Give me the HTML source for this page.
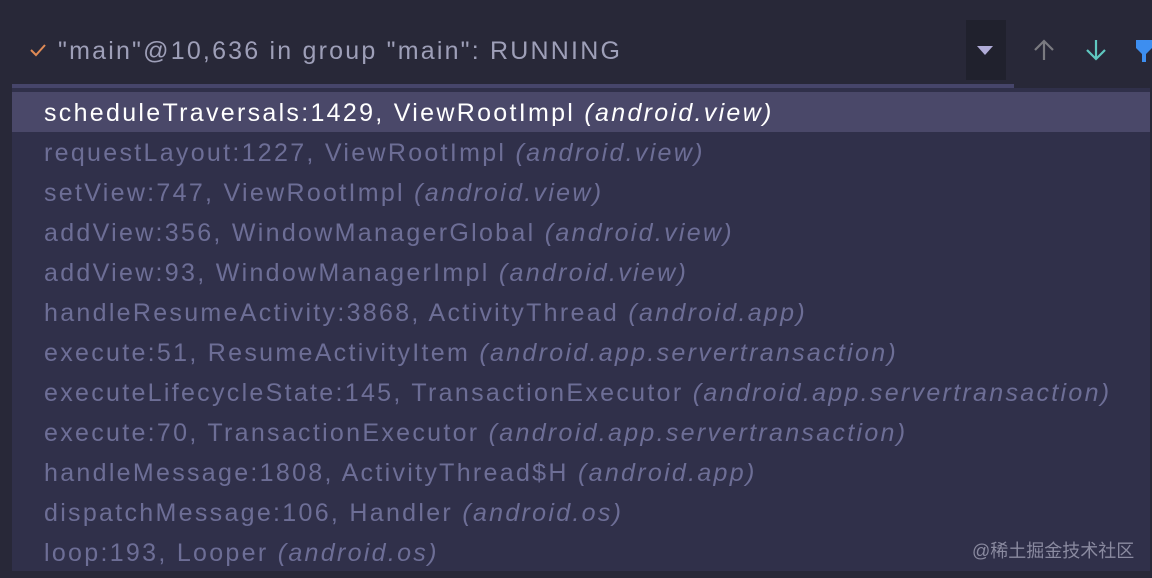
<!DOCTYPE html>
<html><head><meta charset="utf-8"><style>
html,body{margin:0;padding:0}
body{width:1152px;height:578px;background:#282838;position:relative;overflow:hidden;font-family:"Liberation Sans",sans-serif}
.hdr{position:absolute;left:58px;top:37px;font-size:25px;color:#9e9fb8;letter-spacing:2.2px;white-space:nowrap}
.chk{position:absolute;left:29px;top:43px}
.dd{position:absolute;left:966px;top:20px;width:40px;height:60px;background:#20212d}
.uline{position:absolute;left:12px;top:84px;width:1002px;height:4px;background:#46456a}
.panel{position:absolute;left:12px;top:88px;width:1138px;height:483px;background:#30304a}
.row{position:absolute;left:32px;height:40px;line-height:42px;font-size:25px;color:#6d6e96;letter-spacing:2.3px;white-space:nowrap}
.row i{font-style:italic}
.sel{position:absolute;left:0;top:4px;width:1138px;height:40px;background:#4a4869}
.row.s{color:#ffffff}
.wm{position:absolute;left:972px;top:537px;font-size:18px;color:#8a8aa0;font-family:"Liberation Sans","Noto Sans CJK SC",sans-serif}
</style></head><body>
<svg class="chk" width="18" height="14" viewBox="0 0 18 14"><path d="M2 7l5 5L16 2" stroke="#e08a55" stroke-width="2" fill="none"/></svg>
<div class="hdr">"main"@10,636 in group "main": RUNNING</div>
<div class="dd"><svg style="position:absolute;left:9px;top:24px" width="20" height="12"><path d="M2 2h16l-8 9z" fill="#b0acd8"/></svg></div>
<svg style="position:absolute;left:1031px;top:38px" width="26" height="24"><path d="M13 22V3M4 12l9-9 9 9" stroke="#7a7a80" stroke-width="2.2" fill="none"/></svg>
<svg style="position:absolute;left:1083px;top:38px" width="26" height="24"><path d="M13 2v19M4 12l9 9 9-9" stroke="#5fc8c0" stroke-width="2.2" fill="none"/></svg>
<svg style="position:absolute;left:1136px;top:38px" width="16" height="26"><path d="M0 2h16v8l-6 6v8H6v-8L0 10z" fill="#3d8ef0"/></svg>
<div class="uline"></div>
<div class="panel">
<div class="sel"></div>
<div class="row s" style="top:4px">scheduleTraversals:1429, ViewRootImpl <i>(android.view)</i></div>
<div class="row" style="top:44px">requestLayout:1227, ViewRootImpl <i>(android.view)</i></div>
<div class="row" style="top:84px">setView:747, ViewRootImpl <i>(android.view)</i></div>
<div class="row" style="top:124px">addView:356, WindowManagerGlobal <i>(android.view)</i></div>
<div class="row" style="top:164px">addView:93, WindowManagerImpl <i>(android.view)</i></div>
<div class="row" style="top:204px">handleResumeActivity:3868, ActivityThread <i>(android.app)</i></div>
<div class="row" style="top:244px">execute:51, ResumeActivityItem <i>(android.app.servertransaction)</i></div>
<div class="row" style="top:284px">executeLifecycleState:145, TransactionExecutor <i>(android.app.servertransaction)</i></div>
<div class="row" style="top:324px">execute:70, TransactionExecutor <i>(android.app.servertransaction)</i></div>
<div class="row" style="top:364px">handleMessage:1808, ActivityThread$H <i>(android.app)</i></div>
<div class="row" style="top:404px">dispatchMessage:106, Handler <i>(android.os)</i></div>
<div class="row" style="top:444px">loop:193, Looper <i>(android.os)</i></div>
</div>
<div class="wm">@稀土掘金技术社区</div>
</body></html>
